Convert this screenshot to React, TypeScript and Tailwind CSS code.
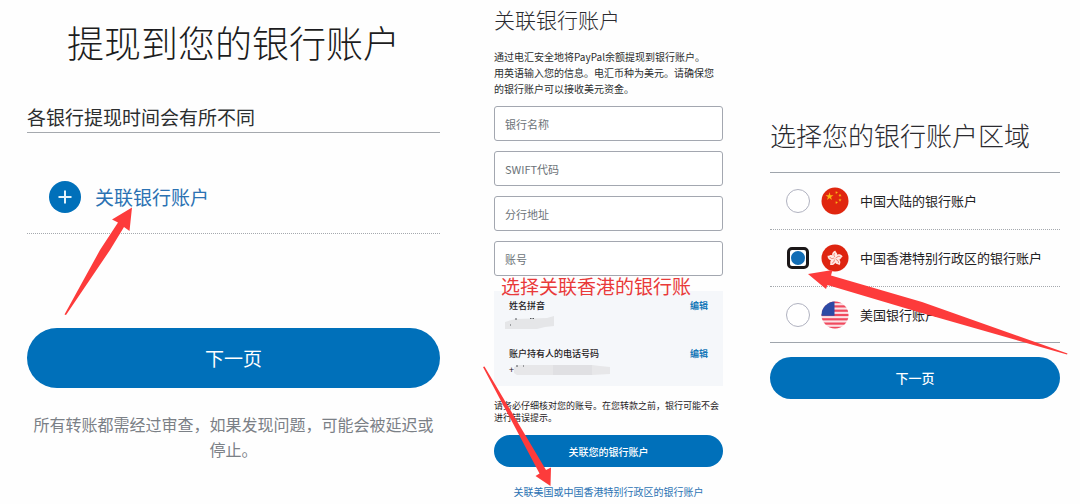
import { useState } from "react";

function PlusIcon() {
  return (
    <svg viewBox="0 0 32 32" className="size-8 shrink-0" aria-hidden="true">
      <circle cx="16" cy="16" r="16" fill="#0070ba" />
      <path d="M16 9.500v13M9.500 16h13" stroke="#e4f3fb" strokeWidth="2" />
    </svg>
  );
}

const STAR = "M0-1 .225-.309 .951-.309 .363.118 .588.809 0 .382-.588.809-.363.118-.951-.309-.225-.309Z";

function ChinaFlag() {
  return (
    <svg viewBox="0 0 28 28" className="size-7 shrink-0" aria-hidden="true">
      <circle cx="14" cy="14" r="13.500" fill="#e0260f" />
      <g fill="#fbb615">
        <path d={STAR} transform="translate(8.500 9.500) scale(4.200)" />
        <path d={STAR} transform="translate(15.500 5.500) rotate(20) scale(1.700)" />
        <path d={STAR} transform="translate(19 8.500) rotate(40) scale(1.700)" />
        <path d={STAR} transform="translate(19 13) scale(1.700)" />
        <path d={STAR} transform="translate(15.500 15.500) rotate(20) scale(1.700)" />
      </g>
    </svg>
  );
}

function HongKongFlag() {
  return (
    <svg viewBox="0 0 28 28" className="size-7 shrink-0" aria-hidden="true">
      <circle cx="14" cy="14" r="13.500" fill="#de2410" />
      {[0, 72, 144, 216, 288].map((angle) => (
        <g key={angle} transform={`translate(14 14.500) rotate(${angle})`}>
          <path d="M0 0C-4-2-3.800-6.600.4-8 .2-6.600 3.400-5 2-2.600 1.400-1.400.5-.8 0 0Z" fill="#ffe9e4" />
          <path d="M0-1.200C-1.400-2.800-1.300-4.400-.2-5.600" fill="none" stroke="#e8523f" strokeWidth=".6" />
        </g>
      ))}
    </svg>
  );
}

function UsaFlag() {
  return (
    <svg viewBox="0 0 28 28" className="size-7 shrink-0" aria-hidden="true">
      <defs>
        <clipPath id="usa-round">
          <circle cx="14" cy="14" r="13.500" />
        </clipPath>
      </defs>
      <g clipPath="url(#usa-round)">
        <rect width="28" height="28" fill="#fbe3e6" />
        {[0, 4.3, 8.6, 12.9, 17.2, 21.5, 25.8].map((y) => (
          <rect key={y} y={y} width="28" height="2.200" fill="#f04a5f" />
        ))}
        <rect width="13.500" height="14.800" fill="#2d4aa5" />
      </g>
    </svg>
  );
}

const fields = ["银行名称", "SWIFT代码", "分行地址", "账号"];

const regions = [
  { id: "cn", label: "中国大陆的银行账户", Flag: ChinaFlag },
  { id: "hk", label: "中国香港特别行政区的银行账户", Flag: HongKongFlag },
  { id: "us", label: "美国银行账户", Flag: UsaFlag },
];

function WithdrawPanel() {
  return (
    <section className="relative px-[27px] pt-[18px]">
      <h1 className="text-center text-[37px] font-light leading-[48px] text-[#1c1c20]">提现到您的银行账户</h1>
      <h2 className="mt-[38px] border-b border-[#a5a9ae] pb-0.5 text-[19px] leading-[26px] text-[#2c2e2f]">
        各银行提现时间会有所不同
      </h2>
      <div className="flex h-[101px] items-center border-b border-dotted border-[#a5a9ae] pl-[22px] pt-7">
        <a href="#link-bank" className="flex items-center gap-[14px] text-[19px] leading-8 text-[#2b72b3]">
          <PlusIcon />
          关联银行账户
        </a>
      </div>
      <button type="button" className="mt-[94px] h-[60px] w-full rounded-full bg-[#0070ba] text-[19px] text-white">
        下一页
      </button>
      <p className="mt-6 text-center text-base leading-[25px] text-[#7b8086]">
        所有转账都需经过审查，如果发现问题，可能会被延迟或停止。
      </p>
      <svg
        viewBox="60 204 76 114"
        className="pointer-events-none absolute left-[60px] top-[204px] h-[114px] w-[76px]"
        aria-hidden="true"
      >
        <path d="M132 207.500 112 219.500 118 222.500 100 250 64.500 314.500 66 315 110 250 124 227 129.500 231Z" fill="#fd3b3b" />
      </svg>
    </section>
  );
}

function BankDetailsPanel() {
  return (
    <section className="relative pl-[27px] pr-6 pt-[6px]">
      <h2 className="text-[21px] font-light leading-[26px] text-[#2b2b30]">关联银行账户</h2>
      <p className="mt-[17px] text-[10px] leading-4 text-[#2c2e2f]">
        通过电汇安全地将PayPal余额提现到银行账户。
        <br />
        用英语输入您的信息。电汇币种为美元。请确保您的银行账户可以接收美元资金。
      </p>
      <div className="mt-[9px] flex flex-col gap-[10px]">
        {fields.map((name) => (
          <input
            key={name}
            type="text"
            aria-label={name}
            placeholder={name}
            className="h-[35px] w-full rounded-[3px] border border-[#a3a7b0] bg-white px-[10px] text-[11px] text-[#2c2e2f] placeholder:text-[#6c7378]"
          />
        ))}
      </div>
      <div className="mt-[15px] h-[95px] bg-[#f5f7fa] px-[15px] pt-[7px] text-[9px] leading-4 text-[#1f2124]">
        <div className="flex justify-between font-medium">
          <span>姓名拼音</span>
          <a href="#edit-name" className="font-bold text-[#1678b8]">编辑</a>
        </div>
        <svg viewBox="0 0 50 16" className="block h-4 w-[50px] overflow-visible" aria-hidden="true">
          <path d="M-4 8 6 5 38 4 45 2 45 12 36 13 28 15-4 15Z" fill="#e5e6e8" />
          <path d="M6 5h2M21 4.500h1.500M23.500 4.500h1.500M1 11h1" stroke="#55585c" strokeWidth="1" />
        </svg>
        <div className="mt-4 flex justify-between font-medium">
          <span>账户持有人的电话号码</span>
          <a href="#edit-phone" className="font-bold text-[#1678b8]">编辑</a>
        </div>
        <div className="flex items-center">
          <span>+</span>
          <svg viewBox="0 0 98 12" className="block h-3 w-[98px]" aria-hidden="true">
            <path d="M0 3 5 1 78 1 86 2 96 3 96 10 78 11 3 11 0 9Z" fill="#e7e7e9" />
            <path d="M39 1h39v10H39Z" fill="#e0e0e3" />
            <path d="M2 2h2M9 2h1" stroke="#4b4e52" strokeWidth="1" />
          </svg>
        </div>
      </div>
      <p className="mt-[14px] text-[9px] leading-3 text-[#1f2124]">
        请务必仔细核对您的账号。在您转款之前，银行可能不会进行错误提示。
      </p>
      <button type="button" className="mt-[11px] block h-8 w-full rounded-full bg-[#0070ba] text-[10px] font-medium text-white">
        关联您的银行账户
      </button>
      <a href="#other-region" className="mt-[17px] block text-center text-[10px] leading-4 text-[#2b72b3]">
        关联美国或中国香港特别行政区的银行账户
      </a>
      <p className="absolute left-[34px] top-[273px] whitespace-nowrap text-[19px] leading-[26px] text-[#e93a3a]">
        选择关联香港的银行账
      </p>
      <svg
        viewBox="482 365 72 124"
        className="pointer-events-none absolute left-[15px] top-[365px] h-[124px] w-[72px]"
        aria-hidden="true"
      >
        <path d="M550.500 486 535.500 476 539.500 473.500 483 367 484.500 366.500 546 470 551 467.500Z" fill="#fd3b3b" />
      </svg>
    </section>
  );
}

function RegionPanel() {
  const [selected, setSelected] = useState("hk");
  return (
    <section className="relative pl-[23px] pr-5 pt-[118px]">
      <h2 className="text-[26px] font-light leading-[34px] text-[#2b2b30]">选择您的银行账户区域</h2>
      <fieldset className="mt-5 border-y border-[#9fa5ac]">
        {regions.map(({ id, label, Flag }) => (
          <label
            key={id}
            className="flex h-[57px] items-center border-b border-dotted border-[#a5a9ae] pl-4 text-[13px] text-[#1f2124] last:h-[55px] last:border-b-0"
          >
            <input
              type="radio"
              name="region"
              value={id}
              checked={selected === id}
              onChange={() => setSelected(id)}
              className="grid size-6 shrink-0 appearance-none place-items-center rounded-full border border-[#b0b2c0] bg-white checked:mx-px checked:size-[22px] checked:rounded-[5px] checked:border-[3px] checked:border-[#1b1718] checked:before:size-3.5 checked:before:rounded-full checked:before:bg-[#126db5] checked:before:content-['']"
            />
            <span className="mx-[11px]">
              <Flag />
            </span>
            {label}
          </label>
        ))}
      </fieldset>
      <button type="button" className="mt-[14px] h-[42px] w-full rounded-full bg-[#0070ba] text-[13px] font-medium text-white">
        下一页
      </button>
      <svg
        viewBox="806 266 264 92"
        className="pointer-events-none absolute left-[59px] top-[266px] h-[92px] w-[264px]"
        aria-hidden="true"
      >
        <path d="M808 274 832.500 270 831 275.500 922 302 1067.500 353.500 1067 354.500 1030 344 920 312.500 827.500 285 826 289Z" fill="#fd3b3b" />
      </svg>
    </section>
  );
}

export default function App() {
  return (
    <main className="grid min-h-screen grid-cols-[467fr_280fr_333fr] bg-[#fefefe] font-['Noto_Sans_CJK_SC',sans-serif]">
      <WithdrawPanel />
      <BankDetailsPanel />
      <RegionPanel />
    </main>
  );
}
